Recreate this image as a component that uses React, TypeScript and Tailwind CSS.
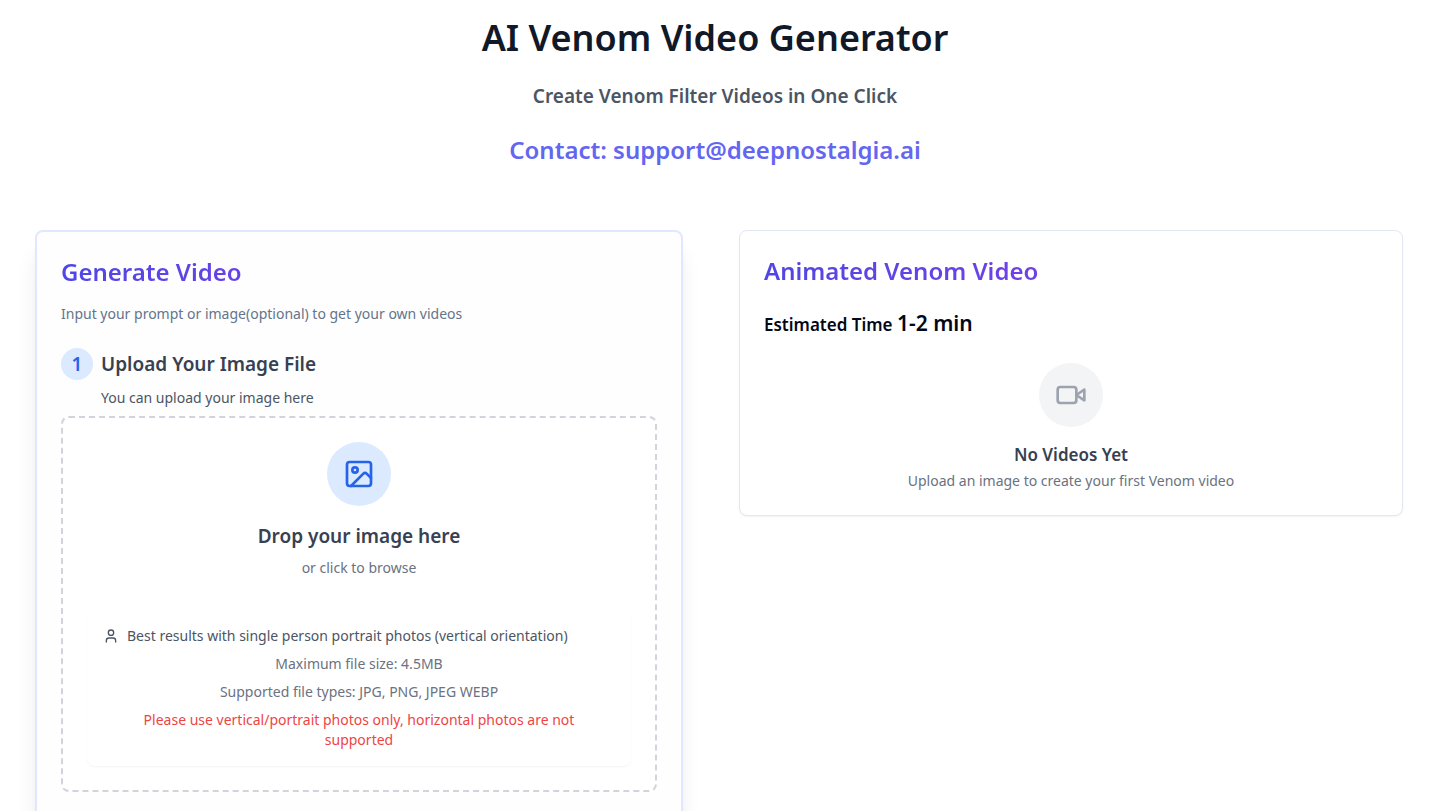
import { useState } from 'react';
import type { ReactNode } from 'react';
import { Image, User } from 'lucide-react';

function VideoIcon() {
  return (
    <svg
      viewBox="0 0 24 24"
      className="w-8 h-8 text-[#9ca3af]"
      fill="none"
      stroke="currentColor"
      strokeWidth={2}
      strokeLinecap="round"
      strokeLinejoin="round"
      aria-hidden="true"
    >
      <path d="m22 8-6 4 6 4V8Z" />
      <rect width="14" height="12" x="2" y="6" rx="2" ry="2" />
    </svg>
  );
}

function CardTitle({ children }: { children: ReactNode }) {
  return (
    <h2 className="text-2xl leading-8 font-semibold bg-linear-to-r from-[#4f46e5] to-[#9333ea] bg-clip-text text-transparent">
      {children}
    </h2>
  );
}

function UploadZone() {
  const [fileName, setFileName] = useState('');

  return (
    <label
      htmlFor="image-file"
      className="mt-2 block cursor-pointer rounded-lg border-2 border-dashed border-[#d1d5db] bg-white p-6 text-center"
    >
      <input
        id="image-file"
        type="file"
        accept=".jpg,.jpeg,.png,.webp"
        className="sr-only"
        onChange={(e) => setFileName(e.target.files?.[0]?.name ?? '')}
      />
      <span className="mx-auto flex h-16 w-16 items-center justify-center rounded-full bg-[#dbeafe]">
        <Image className="h-8 w-8 text-[#2563eb]" />
      </span>
      <span className="mt-4 block text-[19px] leading-7 font-semibold text-[#374151]">
        {fileName || 'Drop your image here'}
      </span>
      <span className="mt-2 block text-sm leading-5 text-[#6b7280]">or click to browse</span>

      <span className="mt-8 flex flex-col gap-2 rounded-lg p-4 text-sm leading-5 text-[#6b7280] shadow-xs">
        <span className="flex items-center gap-2 text-[#4b5563]">
          <User className="h-4 w-4 shrink-0" />
          Best results with single person portrait photos (vertical orientation)
        </span>
        <span>Maximum file size: 4.5MB</span>
        <span>Supported file types: JPG, PNG, JPEG WEBP</span>
        <span className="px-4 text-[#ef4444]">
          Please use vertical/portrait photos only, horizontal photos are not supported
        </span>
      </span>
    </label>
  );
}

export default function App() {
  return (
    <div className="min-h-screen overflow-hidden bg-white pr-[17px] font-['Noto_Sans',sans-serif] text-[#020817]">
      <header className="pt-[18px] text-center">
        <h1 className="text-4xl leading-10 font-semibold text-[#111827]">AI Venom Video Generator</h1>
        <p className="mt-6 text-[19px] leading-7 font-semibold text-[#4b5563]">
          Create Venom Filter Videos in One Click
        </p>
        <p className="mt-6 text-2xl leading-8 font-semibold text-[#6366f1]">
          Contact: <a href="mailto:support@deepnostalgia.ai">support@deepnostalgia.ai</a>
        </p>
      </header>

      <main className="mt-16 grid grid-cols-[648fr_664fr] items-start gap-14 pr-[27px] pl-[35px]">
        <section className="rounded-lg border-2 border-[#e0e7ff] bg-[#fefefe] p-6 pb-12 shadow-xl">
          <CardTitle>Generate Video</CardTitle>
          <p className="mt-4 text-sm leading-5 text-[#64748b]">
            Input your prompt or image(optional) to get your own videos
          </p>
          <div className="mt-6 flex items-center gap-2">
            <span className="flex h-8 w-8 items-center justify-center rounded-full bg-[#dbeafe] text-[19px] leading-7 font-semibold text-[#2563eb]">
              1
            </span>
            <h3 className="text-[19px] leading-7 font-semibold text-[#374151]">Upload Your Image File</h3>
          </div>
          <p className="mt-2 ml-10 text-sm leading-5 text-[#4b5563]">You can upload your image here</p>
          <UploadZone />
        </section>

        <section className="rounded-lg border border-[#e2e8f0] bg-white p-6 shadow-xs">
          <CardTitle>Animated Venom Video</CardTitle>
          <p className="mt-6 text-[17px] leading-7 font-semibold">
            Estimated Time <span className="text-[21px] leading-none">1-2 min</span>
          </p>
          <div className="mt-6 flex flex-col items-center text-center">
            <span className="flex h-16 w-16 items-center justify-center rounded-full bg-[#f3f4f6]">
              <VideoIcon />
            </span>
            <h3 className="mt-4 text-[17px] leading-6 font-semibold text-[#374151]">No Videos Yet</h3>
            <p className="mt-1 text-sm leading-5 text-[#6b7280]">
              Upload an image to create your first Venom video
            </p>
          </div>
        </section>
      </main>
    </div>
  );
}
